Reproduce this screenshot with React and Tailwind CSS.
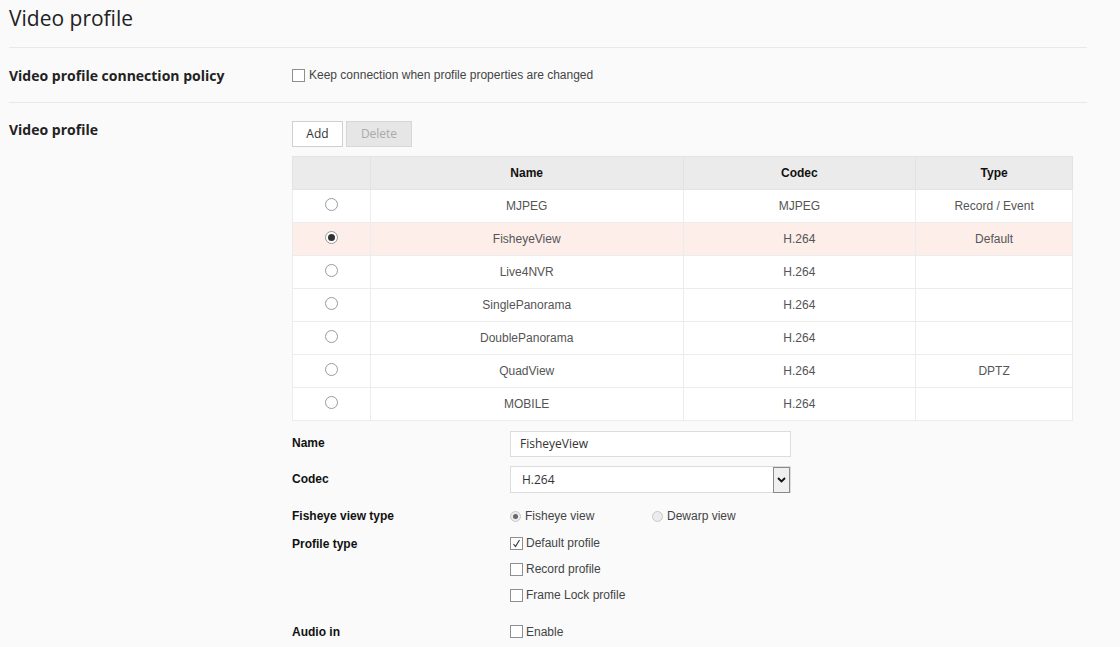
import React from 'react';

const rows = [
  { name: 'MJPEG', codec: 'MJPEG', type: 'Record / Event' },
  { name: 'FisheyeView', codec: 'H.264', type: 'Default', selected: true },
  { name: 'Live4NVR', codec: 'H.264', type: '' },
  { name: 'SinglePanorama', codec: 'H.264', type: '' },
  { name: 'DoublePanorama', codec: 'H.264', type: '' },
  { name: 'QuadView', codec: 'H.264', type: 'DPTZ' },
  { name: 'MOBILE', codec: 'H.264', type: '' },
];

const Check = ({ checked }) => (
  <span className="inline-flex w-[13px] h-[13px] border border-[#8f8f8f] bg-white items-center justify-center shrink-0">
    {checked && (
      <svg width="9" height="9" viewBox="0 0 9 9">
        <path d="M1.5 5 L3.5 7.5 L7.5 1" fill="none" stroke="#333" strokeWidth="1.1" />
      </svg>
    )}
  </span>
);

const SmallRadio = ({ checked }) => (
  <span className="inline-flex w-[11px] h-[11px] rounded-full border border-[#c8c8c8] bg-[#ececec] items-center justify-center shrink-0">
    {checked && <span className="w-[5px] h-[5px] rounded-full bg-[#666]" />}
  </span>
);

const TableRadio = ({ checked }) => (
  <span className="inline-flex w-[13px] h-[13px] rounded-full border border-[#9a9a9a] bg-white items-center justify-center">
    {checked && <span className="w-[7px] h-[7px] rounded-full bg-[#333]" />}
  </span>
);

export default function App() {
  const open = { fontFamily: '"Open Sans", "Liberation Sans", sans-serif' };
  const arial = { fontFamily: '"Liberation Sans", Arial, sans-serif' };

  return (
    <div className="w-[1120px] h-[647px] bg-[#fafafa] overflow-hidden pl-[9px]" style={arial}>
      <div className="w-[1078px]">
        {/* Title */}
        <div className="h-[48px] border-b border-[#e8e8e8] pt-[4px]">
          <h1 className="text-[21px] text-[#222] leading-[28px]" style={open}>Video profile</h1>
        </div>

        {/* Connection policy */}
        <div className="h-[55px] border-b border-[#e8e8e8] flex items-center">
          <div className="w-[283px] text-[14px] font-bold text-[#222]" style={open}>Video profile connection policy</div>
          <label className="flex items-center gap-[4px] text-[12px] text-[#444]">
            <Check />
            <span>Keep connection when profile properties are changed</span>
          </label>
        </div>

        {/* Video profile */}
        <div className="flex pt-[16px]">
          <div className="w-[283px] text-[14px] font-bold text-[#222]" style={open}>Video profile</div>
          <div className="w-[781px] pt-[2px]">
            <div className="flex gap-[3px]">
              <button className="w-[51px] h-[26px] bg-white border border-[#cfcfcf] text-[12px] text-[#333]" style={open}>Add</button>
              <button className="w-[66px] h-[26px] bg-[#e6e6e6] border border-[#d6d6d6] text-[12px] text-[#aaa]" style={open}>Delete</button>
            </div>

            <table className="mt-[9px] w-[781px] border-collapse text-[12px] bg-white">
              <thead>
                <tr className="bg-[#ebebeb] h-[33px] text-[#111] font-bold">
                  <th className="w-[78px] border border-[#e3e3e3]"></th>
                  <th className="w-[313px] border border-[#e3e3e3]">Name</th>
                  <th className="w-[233px] border border-[#e3e3e3]">Codec</th>
                  <th className="w-[157px] border border-[#e3e3e3]">Type</th>
                </tr>
              </thead>
              <tbody>
                {rows.map((r) => (
                  <tr key={r.name} className={`h-[33px] text-[#555] ${r.selected ? 'bg-[#fdeeea]' : 'bg-white'}`}>
                    <td className="border border-[#ececec] text-center align-middle">
                      <div className="flex justify-center -mt-[4px]"><TableRadio checked={r.selected} /></div>
                    </td>
                    <td className="border border-[#ececec] text-center">{r.name}</td>
                    <td className="border border-[#ececec] text-center">{r.codec}</td>
                    <td className="border border-[#ececec] text-center">{r.type}</td>
                  </tr>
                ))}
              </tbody>
            </table>

            {/* Form */}
            <div className="mt-[10px] text-[12px]">
              <div className="flex items-center h-[26px]">
                <div className="w-[218px] font-bold text-[#111] -mt-[2px]">Name</div>
                <div className="w-[281px] h-[26px] bg-white border border-[#dcdcdc] flex items-center pl-[9px] text-[12px] text-[#333]" style={open}>FisheyeView</div>
              </div>
              <div className="flex items-center h-[27px] mt-[9px]">
                <div className="w-[218px] font-bold text-[#111] -mt-[2px]">Codec</div>
                <div className="w-[281px] h-[27px] bg-white border border-[#dcdcdc] flex items-center text-[12px] text-[#333]" style={open}>
                  <span className="flex-1 pl-[11px]">H.264</span>
                  <span className="w-[17px] h-[26px] bg-[#f0f0f0] flex items-center justify-center border border-[#8a8a8a]">
                    <svg width="9" height="6" viewBox="0 0 9 6">
                      <path d="M1 1 L4.5 4.5 L8 1" fill="none" stroke="#111" strokeWidth="1.8" />
                    </svg>
                  </span>
                </div>
              </div>
              <div className="flex items-center h-[20px] mt-[13px]">
                <div className="w-[218px] font-bold text-[#111]">Fisheye view type</div>
                <label className="flex items-center gap-[4px] text-[#444] w-[142px]">
                  <SmallRadio checked />
                  <span>Fisheye view</span>
                </label>
                <label className="flex items-center gap-[4px] text-[#444]">
                  <SmallRadio />
                  <span>Dewarp view</span>
                </label>
              </div>
              <div className="flex mt-[8px]">
                <div className="w-[218px] font-bold text-[#111] pt-[1px]">Profile type</div>
                <div className="flex flex-col gap-[8px] text-[#444]">
                  <label className="flex items-center gap-[3px] h-[18px]"><Check checked /><span>Default profile</span></label>
                  <label className="flex items-center gap-[3px] h-[18px]"><Check /><span>Record profile</span></label>
                  <label className="flex items-center gap-[3px] h-[18px]"><Check /><span>Frame Lock profile</span></label>
                </div>
              </div>
              <div className="flex items-center mt-[18px]">
                <div className="w-[218px] font-bold text-[#111] pt-[1px]">Audio in</div>
                <label className="flex items-center gap-[3px] h-[18px] text-[#444]"><Check /><span>Enable</span></label>
              </div>
            </div>
          </div>
        </div>
      </div>
    </div>
  );
}
